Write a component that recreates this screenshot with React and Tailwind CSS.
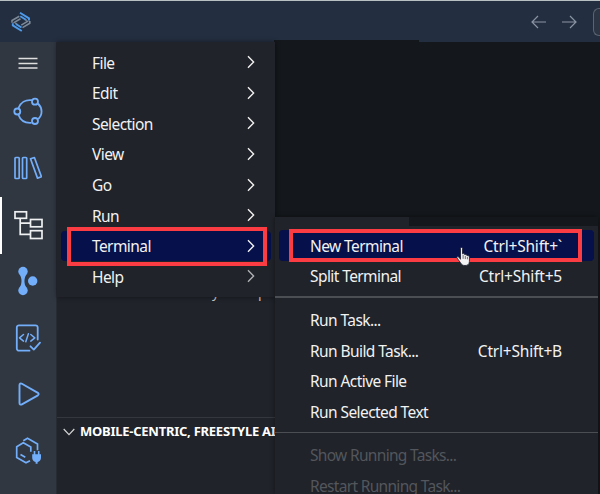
import React from 'react';

const mainMenu = ['File', 'Edit', 'Selection', 'View', 'Go', 'Run', 'Terminal', 'Help'];

function Chevron({ dim }) {
  return (
    <svg width="10" height="14" viewBox="0 0 10 14" fill="none" stroke={dim ? '#aeb0b3' : '#f1f1f1'} strokeWidth="1.4">
      <path d="M2 1.3 7.6 7 2 12.7" />
    </svg>
  );
}

function Entry({ label, shortcut, active, disabled }) {
  return (
    <div
      className={`mx-[4px] flex h-[30.6px] shrink-0 items-center rounded-[4px] pr-[32px] pl-[31px] ${active ? 'bg-[#06104a]' : ''} ${disabled ? 'text-[#53565c]' : 'text-[#f2f2f2]'}`}
    >
      <span className={`pt-[2.4px] ${disabled ? 'tracking-[-0.68px]' : 'tracking-[-0.58px]'}`}>{label}</span>
      {shortcut && <span className="ml-auto pt-[2.4px] tracking-[-0.2px]">{shortcut}</span>}
    </div>
  );
}

function ActivityIcons() {
  return (
    <>
      <div className="flex h-[42px] items-center justify-center">
        <svg width="20" height="14" viewBox="0 0 20 14" stroke="#dedede" strokeWidth="1.5">
          <path d="M0.5 2.5h19M0.5 7.5h19M0.5 12h19" />
        </svg>
      </div>
      <div className="flex h-[56.5px] items-center justify-center pb-[2px]">
        <svg width="30" height="28" viewBox="0 0 30 28" fill="none" stroke="#73aefa" strokeWidth="1.8">
          <circle cx="4.3" cy="14.5" r="3" />
          <circle cx="22" cy="4.7" r="3" />
          <circle cx="22" cy="24" r="3" />
          <path d="M5.5 11C7.5 5.5 12.5 2.3 19 3.2M25 6.5c4.6 4.5 4.8 11.3.2 15.5M5.5 18c2 5.5 6.5 8.3 13 7.8" />
        </svg>
      </div>
      <div className="flex h-[56.5px] items-center justify-center pb-[1px]">
        <svg width="28" height="24" viewBox="0 0 28 24" fill="none" stroke="#73aefa" strokeWidth="1.7" strokeLinejoin="round">
          <rect x="1" y="1.5" width="4.2" height="21" rx=".8" />
          <rect x="8.5" y="1.5" width="4.2" height="21" rx=".8" />
          <path d="m16.5 2.8 3.9-1.3 7 19.2-3.9 1.4z" />
        </svg>
      </div>
      <div className="flex h-[56.5px] items-center border-l-[2px] border-white pb-[1px]">
        <svg className="ml-[12px]" width="30" height="30" viewBox="0 0 30 30" fill="none" stroke="#eef0f1" strokeWidth="1.7">
          <rect x="1" y="1.8" width="11.5" height="6.5" />
          <rect x="16.5" y="9.5" width="11.5" height="7.3" />
          <rect x="16.5" y="20.7" width="11.5" height="7.8" />
          <path d="M6.2 8.5v15.8h10M6.2 13.2h10" />
        </svg>
      </div>
      <div className="flex h-[56.5px] items-center justify-center pb-[2px]">
        <svg width="20" height="30" viewBox="0 0 20 30" fill="#73aefa">
          <circle cx="5" cy="5.5" r="4.7" />
          <circle cx="5" cy="24.5" r="4.7" />
          <circle cx="14.7" cy="15" r="4.7" />
          <path d="M1.5 8.5c2.7 3 2.7 10 0 13h7c-2.7-3-2.7-10 0-13z" />
        </svg>
      </div>
      <div className="flex h-[56.5px] items-center justify-center pb-[1px]">
        <svg width="26" height="28" viewBox="0 0 26 28" fill="none" stroke="#73aefa" strokeWidth="1.8" strokeLinecap="round" strokeLinejoin="round">
          <path d="M22.7 15.5V3.5a2.2 2.2 0 0 0-2.2-2.2H4a2.2 2.2 0 0 0-2.2 2.2v21A2.2 2.2 0 0 0 4 26.7h10.5" />
          <path d="m15.5 22.3 3.3 3.3 6.2-7" />
          <path d="m8.5 10.5-4 3.3 4 3.3M15.8 10.5l4 3.3-4 3.3M13.4 9.8l-2.6 8" strokeWidth="1.5" />
        </svg>
      </div>
      <div className="flex h-[56.5px] items-center justify-center pr-0 pb-[2px] pl-[2px]">
        <svg width="22" height="24" viewBox="0 0 22 24" fill="none" stroke="#73aefa" strokeWidth="1.9" strokeLinejoin="round">
          <path d="M1.5 3.2c0-1.6 1-2.2 2.4-1.4l16 9c1 .7 1 1.8 0 2.5l-16 9c-1.4.8-2.4.1-2.4-1.4z" />
        </svg>
      </div>
      <div className="flex h-[57px] items-center justify-center pb-[2px]">
        <svg width="26" height="28" viewBox="0 0 26 28" fill="none" stroke="#73aefa" strokeWidth="1.7">
          <path d="M15 23.7l-4 2.1-9.3-5.3V9.7l6.6-3.9 7.5 4.3v4.7M8.3 3.7l4.2-2.4 10 5.7v6.3M5.5 17.5l4.8 2.8" />
          <path d="M17.2 17.2h8.8v3.6c0 2.4-1.3 3.8-3.4 4.3v1.7h-2v-1.7c-2.1-.5-3.4-1.9-3.4-4.3zM18.7 14h1.6v3.5h-1.6zM22.9 14h1.6v3.5h-1.6z" fill="#73aefa" stroke="none" />
        </svg>
      </div>
    </>
  );
}

export default function App() {
  return (
    <div className="relative flex h-[494px] w-[600px] flex-col overflow-hidden bg-[#15181c] font-['Noto_Sans','Open_Sans',sans-serif] text-[15.5px]">
      <header className="flex h-[42px] shrink-0 items-center border-t border-[#b9c0c2] bg-[#232e40] pl-[11px]">
        <svg width="20" height="20" viewBox="0 0 20 20" fill="none" strokeWidth="1.6">
          <path d="M8.3 4.2 1 8.5v2.3M9.5 6.7 2.5 10.9M11.5 15.6l7.3-4.3V9M10.3 13.1l7-4.2M6 12.3l-1.8-1M14 7.5l1.8 1" stroke="#7c8997" />
          <path d="M9 .8 18 6.4v2.2M9.3 4.3 14.5 7.5M10.8 19 1.8 13.4v-2.2M10.5 15.5 5.3 12.3" stroke="#4d9bea" strokeWidth="1.9" />
        </svg>
        <div className="ml-auto flex items-center gap-[16px]">
          <svg width="15" height="14" viewBox="0 0 15 14" fill="none" stroke="#8b94a2" strokeWidth="1.2">
            <path d="M15 7H1M7 1 1 7l6 6" />
          </svg>
          <svg width="15" height="14" viewBox="0 0 15 14" fill="none" stroke="#8b94a2" strokeWidth="1.2">
            <path d="M0 7h14M8 1l6 6-6 6" />
          </svg>
          <div className="h-[28px] w-[7px] rounded-l-[6px] border border-r-0 border-[#5b6470] bg-[#2b3544]" />
        </div>
      </header>

      <div className="flex min-h-0 flex-1">
        <nav className="flex w-[56px] shrink-0 flex-col bg-[#303741]">
          <ActivityIcons />
        </nav>
        <aside className="flex w-[219px] shrink-0 flex-col border-l border-[#272b32] bg-[#20232a]">
          <div className="flex h-[375px] items-end pb-[115px] pl-[155px] text-[14px] leading-[20px] text-[#c5c7c9]">
            <span className="w-[46px]">y</span>
            <span>p</span>
          </div>
          <div className="flex h-[28px] items-center overflow-hidden border-t border-[#34383e] pl-[6px] whitespace-nowrap">
            <svg className="shrink-0" width="12" height="8" viewBox="0 0 12 8" fill="none" stroke="#d2d3d4" strokeWidth="1.2">
              <path d="m.7 1 5.3 5.7L11.3 1" />
            </svg>
            <span className="ml-[5px] text-[13px] font-bold tracking-[-0.25px] text-white">MOBILE-CENTRIC, FREESTYLE AI</span>
          </div>
        </aside>
        <main className="flex-1 bg-[#14171b]" />
      </div>

      <div className="absolute top-[40px] left-[274px] h-[4px] w-[145px] bg-[#14171b]" />

      <div className="absolute top-[42px] left-[57px] flex h-[255px] w-[218px] flex-col bg-[#202329] pt-[5px] shadow-[0_0_5px_rgba(0,0,0,0.45)]">
        {mainMenu.map((label) => (
          <div
            key={label}
            className={`mx-[4px] flex h-[30.6px] shrink-0 items-center justify-between rounded-[4px] pr-[15px] pl-[31px] text-[#f2f2f2] ${label === 'Terminal' ? 'bg-[#06104a]' : ''}`}
          >
            <span className="pt-[2px] tracking-[-0.58px]">{label}</span>
            <Chevron dim={label === 'Help'} />
          </div>
        ))}
      </div>

      <div className="absolute top-[217px] left-[275px] flex h-[277px] w-[323px] flex-col overflow-hidden rounded-tr-[5px] bg-[#202329] pt-[13px] shadow-[0_0_5px_rgba(0,0,0,0.45)]">
        <Entry label="New Terminal" shortcut="Ctrl+Shift+`" active />
        <Entry label="Split Terminal" shortcut="Ctrl+Shift+5" />
        <div className="mt-[5px] mb-[6.5px] h-[1.5px] shrink-0 bg-[#4b4e53]" />
        <Entry label="Run Task..." />
        <Entry label="Run Build Task..." shortcut="Ctrl+Shift+B" />
        <Entry label="Run Active File" />
        <Entry label="Run Selected Text" />
        <div className="mt-[5px] mb-[6.5px] h-[1.5px] shrink-0 bg-[#4b4e53]" />
        <Entry label="Show Running Tasks..." disabled />
        <Entry label="Restart Running Task..." disabled />
      </div>

      <div className="absolute top-[217px] left-[409px] h-[9px] w-[189px] bg-[#14171b]" />

      <div className="absolute top-[227px] left-[67px] h-[39px] w-[200px] border-[4px] border-[#fb3c42]" />
      <div className="absolute top-[229px] left-[289px] h-[33px] w-[293px] border-[4px] border-[#fb3c42]" />

      <svg className="absolute top-[247px] left-[456px]" width="16" height="19" viewBox="0 0 16 19">
        <path d="M4.5 1.5c0-1.3 2-1.3 2 0v5.3c1-.6 2-.1 2.2.8 1-.4 2 0 2.3 1 1-.3 2.4.2 2.4 1.5v4.3c0 3-1.8 4.1-4.4 4.1-2.3 0-3.6-.9-4.5-2.8L1 11c-.6-1.3 1-2 1.8-.9l1.7 2.2z" fill="#f4f4f4" stroke="#161a2c" strokeWidth=".8" />
        <path d="M7.1 7.8v4M9.3 8.8v3.3M11.4 9.8v2.5" stroke="#30323c" strokeWidth=".7" />
      </svg>
    </div>
  );
}
